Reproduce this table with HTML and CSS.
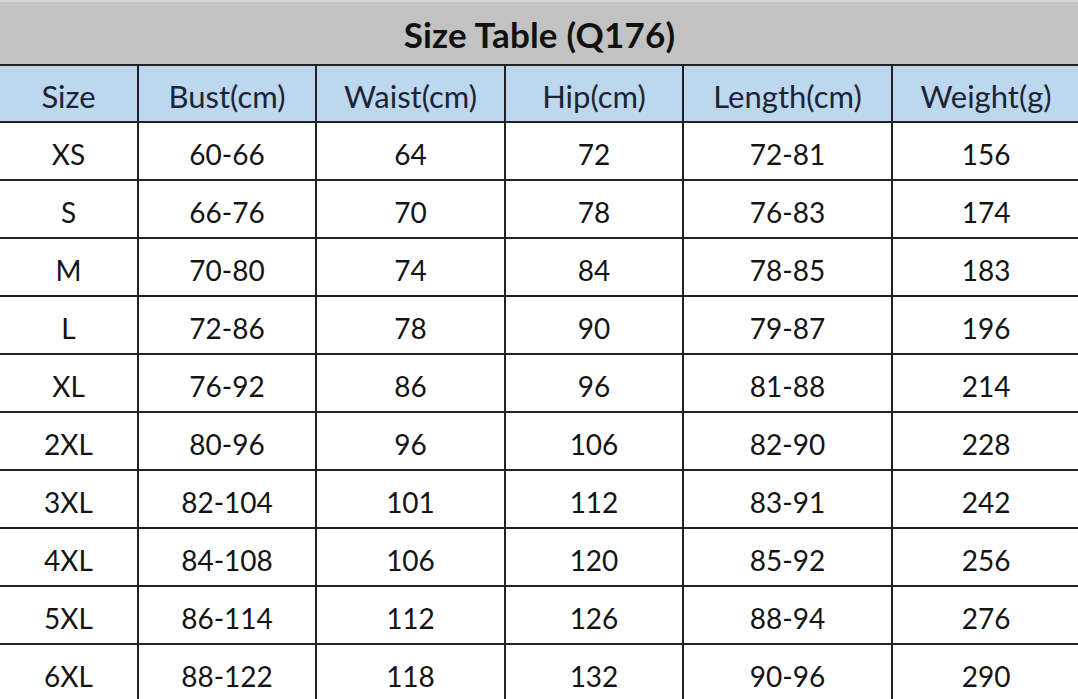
FILE: index.html
```html
<!DOCTYPE html>
<html>
<head>
<meta charset="utf-8">
<link rel="stylesheet" href="styles.css">
</head>
<body>
<table class="size-table">
  <colgroup>
    <col class="c1"><col class="c2"><col class="c3"><col class="c4"><col class="c5"><col class="c6">
  </colgroup>
  <thead>
    <tr class="title-row"><th colspan="6">Size Table (Q176)</th></tr>
    <tr class="head-row">
      <th>Size</th><th>Bust(cm)</th><th>Waist(cm)</th><th>Hip(cm)</th><th>Length(cm)</th><th>Weight(g)</th>
    </tr>
  </thead>
  <tbody>
    <tr><td>XS</td><td>60-66</td><td>64</td><td>72</td><td>72-81</td><td>156</td></tr>
    <tr><td>S</td><td>66-76</td><td>70</td><td>78</td><td>76-83</td><td>174</td></tr>
    <tr><td>M</td><td>70-80</td><td>74</td><td>84</td><td>78-85</td><td>183</td></tr>
    <tr><td>L</td><td>72-86</td><td>78</td><td>90</td><td>79-87</td><td>196</td></tr>
    <tr><td>XL</td><td>76-92</td><td>86</td><td>96</td><td>81-88</td><td>214</td></tr>
    <tr><td>2XL</td><td>80-96</td><td>96</td><td>106</td><td>82-90</td><td>228</td></tr>
    <tr><td>3XL</td><td>82-104</td><td>101</td><td>112</td><td>83-91</td><td>242</td></tr>
    <tr><td>4XL</td><td>84-108</td><td>106</td><td>120</td><td>85-92</td><td>256</td></tr>
    <tr><td>5XL</td><td>86-114</td><td>112</td><td>126</td><td>88-94</td><td>276</td></tr>
    <tr><td>6XL</td><td>88-122</td><td>118</td><td>132</td><td>90-96</td><td>290</td></tr>
  </tbody>
</table>
</body>
</html>
```
FILE: styles.css
```css
html, body {
  margin: 0;
  padding: 0;
  background: #ffffff;
  overflow: hidden;
}
.size-table {
  border-collapse: collapse;
  table-layout: fixed;
  width: 1079px;
  font-family: "Lato", "Liberation Sans", sans-serif;
  color: #141414;
}
.c1 { width: 138px; }
.c2 { width: 178px; }
.c3 { width: 189px; }
.c4 { width: 178px; }
.c5 { width: 209px; }
.c6 { width: 187px; }
.size-table th,
.size-table td {
  border: 2px solid #222222;
  text-align: center;
  vertical-align: middle;
  padding: 0;
  font-weight: 400;
  font-size: 28px;
  line-height: 1;
}
.size-table tr > :first-child { border-left: none; }
.size-table tr > :last-child { border-right: none; }
.title-row th {
  height: 59px;
  padding-top: 3px;
  background: #c2c2c2;
  border-top: 2px solid #d6d6d6;
  font-weight: 700;
  font-size: 35px;
  color: #111111;
  letter-spacing: 0.2px;
}
.head-row th {
  height: 49px;
  padding-top: 6px;
  background: #bdd7ee;
  color: #1b2433;
  font-size: 31px;
}
.size-table td {
  height: 51px;
  padding-top: 5px;
}
```
